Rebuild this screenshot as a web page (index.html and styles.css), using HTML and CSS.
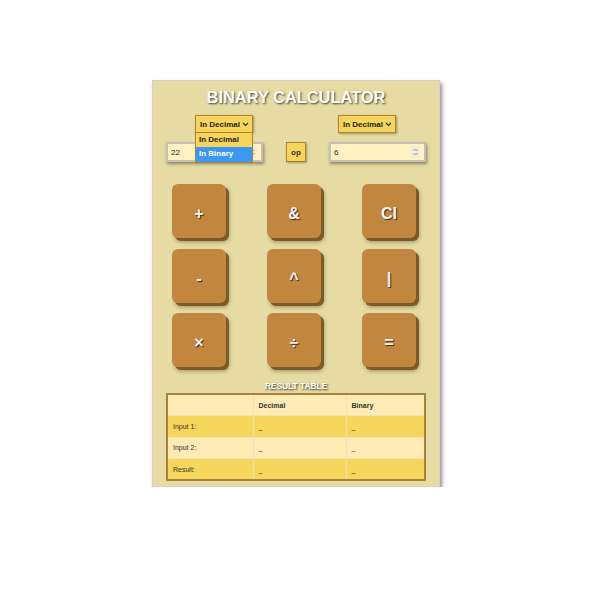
FILE: index.html
```html
<!DOCTYPE html>
<html lang="en">
<head>
    <meta charset="UTF-8">
    <meta name="viewport" content="width=device-width, initial-scale=1.0">
    <title>Binary Calculator</title>
    <link rel="stylesheet" href="styles.css">
</head>
<body>
    <div id="calc">
        <h1>BINARY CALCULATOR</h1>
        <div id="modes">
            <div class="mode-wrap">
                <div class="mode">In Decimal
                    <svg class="chev" width="7" height="5" viewBox="0 0 7 5"><path d="M1 1 L3.5 3.5 L6 1" fill="none" stroke="#333" stroke-width="1.2"/></svg>
                </div>
                <ul class="mode-list">
                    <li class="opt">In Decimal</li>
                    <li class="opt active">In Binary</li>
                </ul>
            </div>
            <div class="mode">In Decimal
                <svg class="chev" width="7" height="5" viewBox="0 0 7 5"><path d="M1 1 L3.5 3.5 L6 1" fill="none" stroke="#333" stroke-width="1.2"/></svg>
            </div>
        </div>
        <div id="inputs">
            <div class="num">
                <input type="text" value="22">
                <span class="spin"><svg width="7" height="10" viewBox="0 0 7 10"><path d="M1.5 4 L3.5 2 L5.5 4 M1.5 6 L3.5 8 L5.5 6" fill="none" stroke="#999" stroke-width="1"/></svg></span>
            </div>
            <button id="op">op</button>
            <div class="num">
                <input type="text" value="6">
                <span class="spin"><svg width="7" height="10" viewBox="0 0 7 10"><path d="M1.5 4 L3.5 2 L5.5 4 M1.5 6 L3.5 8 L5.5 6" fill="none" stroke="#999" stroke-width="1"/></svg></span>
            </div>
        </div>
        <div id="keys">
            <button class="key">+</button>
            <button class="key">&amp;</button>
            <button class="key">Cl</button>
            <button class="key">-</button>
            <button class="key">^</button>
            <button class="key">|</button>
            <button class="key">×</button>
            <button class="key">÷</button>
            <button class="key">=</button>
        </div>
        <h2>RESULT TABLE</h2>
        <table id="result">
            <tr class="head">
                <td></td>
                <th>Decimal</th>
                <th>Binary</th>
            </tr>
            <tr class="dark">
                <td>Input 1:</td>
                <td>_</td>
                <td>_</td>
            </tr>
            <tr>
                <td>Input 2:</td>
                <td>_</td>
                <td>_</td>
            </tr>
            <tr class="dark">
                <td>Result:</td>
                <td>_</td>
                <td>_</td>
            </tr>
        </table>
    </div>
</body>
</html>
```

FILE: styles.css
```css
body {
    margin: 0;
    padding-top: 80px;
    background: #fff;
    font-family: 'Liberation Sans', Arial, sans-serif;
}
#calc {
    width: 260px;
    margin: 0 auto;
    padding: 7px 13px 5px;
    background-color: #e6dba3;
    border: 1px solid #d4d0c4;
    box-shadow: 2px 3px 4px rgba(0, 0, 0, 0.45);
}
h1 {
    margin: 0;
    font-size: 16.4px;
    line-height: 19px;
    text-align: center;
    color: #fff;
    text-shadow: 1px 1px 2px rgba(0, 0, 0, 0.7);
}
#modes {
    display: flex;
    justify-content: space-between;
    padding: 0 30px 0 29px;
    margin-top: 8px;
}
.mode-wrap {
    position: relative;
}
.mode {
    width: 58px;
    height: 18px;
    box-sizing: border-box;
    display: flex;
    align-items: center;
    justify-content: space-between;
    padding: 0 3px 0 4px;
    background-color: #f6d55a;
    border: 1px solid #b08035;
    box-shadow: 1px 1px 2px rgba(0, 0, 0, 0.35);
    font-size: 8px;
    font-weight: bold;
    color: #222;
}
.mode-list {
    position: absolute;
    top: 18px;
    left: 0;
    width: 58px;
    margin: 0;
    padding: 0;
    list-style: none;
    box-sizing: border-box;
    border: 1px solid #b08035;
    border-top: none;
    z-index: 2;
}
.opt {
    height: 14px;
    line-height: 14px;
    padding-left: 3px;
    font-size: 8px;
    font-weight: bold;
    color: #222;
    background-color: #f6d55a;
}
.opt.active {
    background-color: #3d98f2;
    color: #fff;
    height: 15px;
}
#inputs {
    display: flex;
    justify-content: space-between;
    align-items: center;
    margin-top: 9px;
}
.num {
    width: 97px;
    height: 20px;
    box-sizing: border-box;
    display: flex;
    align-items: center;
    background-color: #fff1c2;
    border: 2px solid #c4c0b4;
    box-shadow: 1px 2px 3px rgba(0, 0, 0, 0.4);
}
.num input {
    flex: 1;
    width: 0;
    border: none;
    background: transparent;
    padding: 0 0 0 3px;
    font-family: 'Liberation Sans', Arial, sans-serif;
    font-size: 8px;
    color: #222;
    outline: none;
}
.spin {
    display: flex;
    align-items: center;
    justify-content: center;
    width: 9px;
    height: 12px;
    margin-right: 4px;
    background-color: #f1ebd8;
}
#op {
    width: 20px;
    height: 20px;
    padding: 0;
    background-color: #f6d55a;
    border: 1px solid #b08035;
    box-shadow: 1px 1px 2px rgba(0, 0, 0, 0.3);
    font-family: 'Liberation Sans', Arial, sans-serif;
    font-size: 8px;
    font-weight: bold;
    color: #333;
}
#keys {
    display: grid;
    grid-template-columns: repeat(3, 54px);
    column-gap: 41px;
    row-gap: 10.5px;
    padding-left: 6px;
    margin-top: 22px;
}
.key {
    width: 54px;
    height: 54px;
    padding: 6px 0 0;
    border: none;
    border-radius: 6px;
    background-color: #c1873f;
    box-shadow: 3px 3px 0 #7c5a28, 3px 4px 4px rgba(0, 0, 0, 0.35);
    font-family: 'Liberation Sans', Arial, sans-serif;
    font-size: 16px;
    font-weight: bold;
    color: #f4f4f4;
    text-shadow: 1px 1px 1px rgba(0, 0, 0, 0.7);
}
h2 {
    margin: 14px 0 2px;
    font-size: 8.4px;
    line-height: 10px;
    text-align: center;
    color: #fff;
    text-shadow: 1px 1px 2px rgba(0, 0, 0, 0.8);
}
#result {
    width: 100%;
    border-collapse: collapse;
    border: 2px solid #a9803c;
    font-size: 7px;
    color: #333;
}
#result td, #result th {
    height: 21.5px;
    padding: 0 0 0 5px;
    box-sizing: border-box;
    text-align: left;
    border: 1px solid #efe2b6;
}
#result th {
    font-weight: bold;
}
#result td:first-child {
    width: 86px;
}
#result th:nth-child(2), #result td:nth-child(2) {
    width: 93px;
}
#result tr {
    background-color: #ffebb3;
}
#result tr.dark {
    background-color: #f6d65b;
}
```
